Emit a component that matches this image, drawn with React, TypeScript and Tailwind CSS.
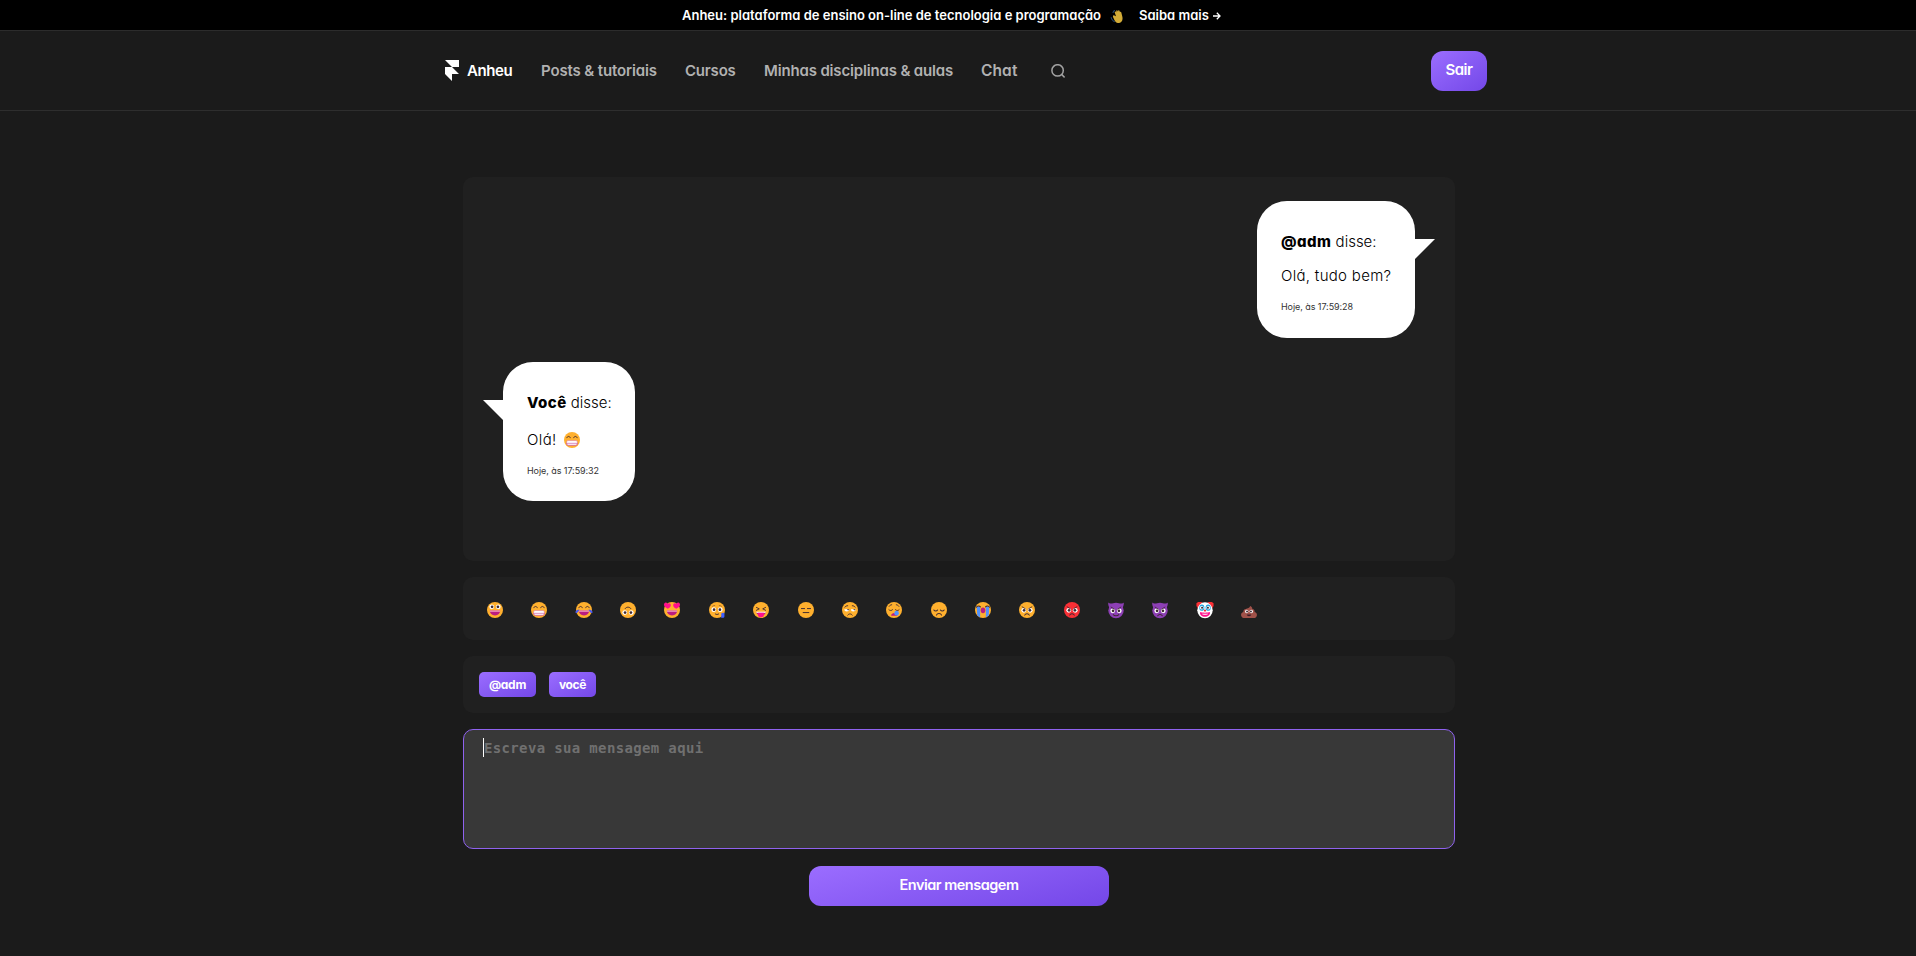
import type { ReactNode } from "react";

const YELLOW = "#FFB02E";
const DARK = "#402A32";
const WINE = "#BB1D80";

function Emoji({ children }: { children: ReactNode }) {
  return (
    <svg viewBox="2 2 28 28" className="h-4 w-4 shrink-0 overflow-visible" fill="none">
      {children}
    </svg>
  );
}

function Face({ color = YELLOW }: { color?: string }) {
  return <circle cx="16" cy="16" r="14" fill={color} />;
}

function Eyes({ y, left = 10.3, right = 21.7, r = 4.2 }: { y: number; left?: number; right?: number; r?: number }) {
  return (
    <>
      <circle cx={left} cy={y} r={r} fill="#fff" />
      <circle cx={right} cy={y} r={r} fill="#fff" />
      <circle cx={left + 0.6} cy={y} r={r * 0.56} fill={DARK} />
      <circle cx={right - 0.6} cy={y} r={r * 0.56} fill={DARK} />
    </>
  );
}

function HappyEyes() {
  return (
    <path
      d="M7 12c.8-3.2 5.2-3.2 6 0M19 12c.8-3.2 5.2-3.2 6 0"
      stroke={DARK}
      strokeWidth="1.6"
      strokeLinecap="round"
    />
  );
}

function OpenMouth() {
  return (
    <>
      <path d="M7 17h18c0 5-3.5 8.500-9 8.500s-9-3.500-9-8.500Z" fill={WINE} />
      <path d="M7 17h18l-.3 2H7.300Z" fill="#F3A3C3" />
    </>
  );
}

function Grin() {
  return (
    <Emoji>
      <Face />
      <HappyEyes />
      <rect x="6.500" y="17" width="19" height="8" rx="2.500" fill="#fff" stroke="#D45B8E" strokeWidth=".8" />
      <path d="M6.500 21.800c.5 2.200 1.500 3.400 3.500 3.400h12c2 0 3-1.200 3.500-3.400Z" fill="#fff" stroke={WINE} strokeWidth=".9" />
    </Emoji>
  );
}

function AngryFace({ color }: { color: string }) {
  return (
    <Emoji>
      <Face color={color} />
      <Eyes y={16.5} />
      <path d="M7.500 10.500 13 13.800M24.500 10.500 19 13.800" stroke={DARK} strokeWidth="1.500" strokeLinecap="round" />
      <path d="M12 25c1.500-3 6.500-3 8 0" stroke={DARK} strokeWidth="1.800" strokeLinecap="round" />
    </Emoji>
  );
}

function Devil({ smile }: { smile: boolean }) {
  return (
    <Emoji>
      <path d="M2.500 3c2 2.500 5 2 8 1L5 13C2.800 10 2 6 2.500 3ZM29.500 3c-2 2.500-5 2-8 1l5.500 9c2.200-3 3-7 2.500-10Z" fill="#8D3FB5" />
      <circle cx="16" cy="17" r="13.500" fill="#8D3FB5" />
      <Eyes y={17.5} />
      <path d="M7.500 11 13 14.500M24.500 11 19 14.500" stroke={DARK} strokeWidth="1.500" strokeLinecap="round" />
      <path
        d={smile ? "M11 24c2 3 8 3 10 0" : "M12 26c1.500-3 6.500-3 8 0"}
        stroke={DARK}
        strokeWidth="1.800"
        strokeLinecap="round"
      />
    </Emoji>
  );
}

function EmojiRow() {
  return (
    <div className="flex gap-[28.37px]">
      <Emoji>
        <Face />
        <Eyes y={10.5} />
        <OpenMouth />
      </Emoji>
      <Grin />
      <Emoji>
        <Face />
        <HappyEyes />
        <OpenMouth />
        <path d="M8 15c-4 0-6.500 2-7 4.500-.3 2 2.500 2.500 3.800 1C6 19 7 17 8 15ZM24 15c4 0 6.500 2 7 4.500.3 2-2.500 2.500-3.800 1C26 19 25 17 24 15Z" fill="#4A5BF0" />
      </Emoji>
      <Emoji>
        <Face />
        <Eyes y={20.5} />
        <path d="M11 13.500c2-3.500 8-3.500 10 0" stroke={DARK} strokeWidth="1.600" strokeLinecap="round" />
      </Emoji>
      <Emoji>
        <Face />
        <OpenMouth />
        <path d="M8.500 14C3 11 .5 7.500 2.500 4.500 4 2.300 7 2.800 8 5c2-1.800 5-1 5.800 1.200C14.800 9.500 12 12 8.500 14ZM23.500 14c5.500-3 8-6.500 6-9.500-1.500-2.200-4.500-1.700-5.500.5-2-1.800-5-1-5.800 1.200C17.200 9.500 20 12 23.500 14Z" fill="#FF0F8C" />
      </Emoji>
      <Emoji>
        <Face />
        <Eyes y={15.5} />
        <path d="M8 9.500c1-1 2.500-1.500 4-1.500M24 9.500C23 8.500 21.500 8 20 8" stroke="#8A5A2B" strokeWidth="1.200" strokeLinecap="round" />
        <path d="M13 23c1.500 1.200 4.500 1.200 6 0" stroke={DARK} strokeWidth="1.600" strokeLinecap="round" />
        <path d="M23.500 30v-8c1-1.500 5-1.500 5.500 0v5.500c0 2-2 2.500-5.500 2.500Z" fill="#3F5FFF" />
      </Emoji>
      <Emoji>
        <Face />
        <path d="m8 11.500 5 2.500-5 2.500M24 11.500 19 14l5 2.500" stroke={DARK} strokeWidth="1.600" strokeLinecap="round" strokeLinejoin="round" />
        <path d="M8 19.500h16c0 3-2 6-8 6s-8-3-8-6Z" fill={WINE} />
        <path d="M8 19h16v2H8Z" fill="#fff" />
        <path d="M11 21h10v4c0 5-10 5-10 0Z" fill="#FF0F8C" />
      </Emoji>
      <Emoji>
        <Face />
        <path d="M8 13.500h5.500M18.500 13.500H24M11 20.500h10" stroke={DARK} strokeWidth="1.700" strokeLinecap="round" />
      </Emoji>
      <Emoji>
        <Face />
        <path d="M6 14.500h8.500a4.250 4.250 0 0 1-8.500 0ZM17.500 14.500H26a4.250 4.250 0 0 1-8.500 0Z" fill="#fff" />
        <path d="M11 14.500h3.500c0 2-3 3-3.500 0ZM22 14.500h3.500c0 2-3 3-3.500 0Z" fill={DARK} />
        <path d="M7 11c1-1.800 3-2.500 5-2.500M25 11c-1-1.800-3-2.500-5-2.500M12 25c1.500-3 6.500-3 8 0" stroke={DARK} strokeWidth="1.600" strokeLinecap="round" />
      </Emoji>
      <Emoji>
        <Face />
        <path d="M7.500 9.500C8.500 8 10 7 12 6.800M24.500 9.500C23.500 8 22 7 20 6.800M7 15.500c1.500 2 5 2 6.500 0M18.500 15.500c1.500 2 5 2 6.500 0" stroke={DARK} strokeWidth="1.600" strokeLinecap="round" />
        <path d="M11 26c0-6 10-7 11 0Z" fill={WINE} />
        <circle cx="20.500" cy="21.500" r="4" fill="#5092FF" />
      </Emoji>
      <Emoji>
        <Face />
        <path d="M7 16c1.500 2.500 5 2.500 6.500 0M18.500 16c1.500 2.500 5 2.500 6.500 0M11.500 25c1.500-4 7.500-4 9 0" stroke={DARK} strokeWidth="1.800" strokeLinecap="round" />
      </Emoji>
      <Emoji>
        <Face />
        <path d="M5 10h6v19l-5-3.500ZM21 10h6l-1 15.500L21 29Z" fill="#5092FF" />
        <path d="M4.500 11C6 8.500 10 8.500 11.500 10.500M27.500 11C26 8.500 22 8.500 20.500 10.500" stroke={DARK} strokeWidth="1.800" strokeLinecap="round" />
        <ellipse cx="16" cy="16.500" rx="4" ry="5" fill={WINE} />
      </Emoji>
      <AngryFace color={YELLOW} />
      <AngryFace color="#F92F35" />
      <Devil smile />
      <Devil smile={false} />
      <Emoji>
        <path d="M1 9V4l3-2h6l3 3-9 9ZM31 9V4l-3-2h-6l-3 3 9 9Z" fill="#F92F35" />
        <ellipse cx="16" cy="16.500" rx="13.500" ry="14" fill="#fff" />
        <ellipse cx="10.500" cy="12" rx="4.500" ry="5.500" fill="#26A6DE" />
        <ellipse cx="21.500" cy="12" rx="4.500" ry="5.500" fill="#26A6DE" />
        <Eyes y={12} r={3.2} />
        <circle cx="16" cy="17" r="2" fill="#F92F35" />
        <path d="M7.500 19.500c3 1.500 14 1.500 17 0 1.500 5-3.500 8.500-8.500 8.500s-10-3.500-8.500-8.500Z" fill="#FF0F8C" />
        <path d="M10.500 22.500h11c-.8 2.600-10.200 2.600-11 0Z" fill="#fff" />
      </Emoji>
      <Emoji>
        <path d="M18 9c2.500 1 4 3 3.800 5.200 3 .5 4.500 2.500 4 5.300 3 .6 4.500 3 4 6-.5 2.800-2.500 4.500-6 4.500H8.500C5 30 2.700 28.300 2.200 25.500c-.5-3 1-5.400 4-6-.3-3 1.200-5 4.300-5.300C13 13.500 17.500 12.500 18 9Z" fill="#A0524A" />
        <Eyes y={18.5} left={12} right={20} r={3} />
        <path d="M12 24h8c-.5 4-7.500 4-8 0Z" fill="#3B1B26" />
      </Emoji>
    </div>
  );
}

function WavingHand() {
  return (
    <svg viewBox="0 0 14 14" className="mt-px ml-2 h-3.5 w-3.5 shrink-0" fill="none">
      <path
        d="M4.300 6.400 6 7.200 4.700 3.300c-.2-.9.9-1.200 1.300-.4L6.300 3.400 6.200 2c0-.9 1.100-1 1.400-.2l.4.900.2-1c.3-.7 1.200-.5 1.400.2l.4 1.400c.3-.6 1.100-.6 1.300.1l1 4.100c.9 3.600-.6 6.200-3.200 6.500-2.300.3-3.900-1.200-4.700-3.100L3 7.900c-.3-.8.500-1.800 1.300-1.500Z"
        fill="#D3AC37"
      />
      <path d="M1.200 8.500c.1 1 .5 1.800 1.200 2.400M2.800 11.500c.4.500.9.900 1.500 1.100M3 3.500C3.300 2.700 3.800 2 4.500 1.500" stroke="#24466E" strokeWidth="1.100" strokeLinecap="round" />
    </svg>
  );
}

function Arrow() {
  return (
    <svg viewBox="0 0 8 8" className="mt-px ml-1 h-2 w-2" fill="none" stroke="#fff" strokeWidth="1.300">
      <path d="M0 4h7M3.800.800 7 4 3.800 7.200" />
    </svg>
  );
}

function Header() {
  return (
    <header className="h-20 border-b border-[#2e2e2e]">
      <div className="mx-auto flex h-[79px] w-[1058px] items-center pl-4 text-[15px] leading-6 font-semibold text-[#b1b1b1]">
        <svg viewBox="0 0 14 21" className="h-[21px] w-3.5" fill="#fff">
          <path d="M0 0h14v7H7ZM0 7h7l7 7H7v7l-7-7Z" />
        </svg>
        <span className="ml-[8px] w-[46px] whitespace-nowrap tracking-[-0.4px] text-white">Anheu</span>
        <nav className="ml-7 flex gap-7 whitespace-nowrap">
          <a className="w-[116px] tracking-[-0.13px]">Posts &amp; tutoriais</a>
          <a className="w-[51px] tracking-[-0.2px]">Cursos</a>
          <a className="w-[189px] tracking-[-0.16px]">Minhas disciplinas &amp; aulas</a>
          <a className="w-[37px] text-[15.5px] tracking-[0.1px]">Chat</a>
        </nav>
        <svg viewBox="0 0 14 14" className="ml-[33px] h-3.5 w-3.5" fill="none" stroke="#a2a2a2" strokeWidth="1.500">
          <circle cx="6.600" cy="6.400" r="5.700" />
          <path d="m10.600 10.400 3 3" />
        </svg>
        <button className="mt-px ml-auto h-10 w-14 rounded-xl bg-linear-to-br from-[#9b6dff] to-[#7447e8] pb-0.5 text-center tracking-[-0.45px] text-white">
          Sair
        </button>
      </div>
    </header>
  );
}

export default function App() {
  return (
    <div className="h-[956px] overflow-hidden bg-[#1b1b1b] font-['Inter',sans-serif] [font-feature-settings:'cv11']">
      <div className="flex h-[31px] items-center border-b border-[#2c2c2c] bg-black pl-[682px] text-[13px] font-semibold whitespace-nowrap text-white">
        <span className="w-[420px] pt-px">Anheu: plataforma de ensino on-line de tecnologia e programação</span>
        <WavingHand />
        <span className="ml-[15px] w-[70px] pt-px">Saiba mais</span>
        <Arrow />
      </div>
      <Header />

      <main className="mx-auto flex w-[994px] flex-col gap-4 pt-[66px] pl-0.5">
        <section className="flex h-[384px] flex-col gap-6 rounded-[10px] bg-[#202020] px-10 pt-6 text-[15px] leading-6 font-light whitespace-nowrap text-black">
          <div className="relative h-[137px] w-[158px] self-end rounded-[30px] bg-white px-6 pt-[29px]">
            <p>
              <b className="font-extrabold tracking-[0.45px]">@adm</b> <span>disse:</span>
            </p>
            <p className="mt-2.5 tracking-[0.3px]">Olá, tudo bem?</p>
            <p className="mt-[11px] text-[9px] leading-4 font-normal tracking-[-0.07px] text-[#333]">Hoje, às 17:59:28</p>
            <svg viewBox="0 0 20 20" className="absolute top-[38px] left-full h-5 w-5" fill="#fff">
              <path d="M-1 0H20L0 20H-1Z" />
            </svg>
          </div>
          <div className="relative h-[139px] w-[132px] rounded-[30px] bg-white px-6 pt-[29px]">
            <p>
              <b className="font-extrabold tracking-[0.45px]">Você</b> <span>disse:</span>
            </p>
            <p className="mt-[13px] flex items-center gap-[7px] tracking-[0.4px]">
              Olá! <Grin />
            </p>
            <p className="mt-[11px] text-[9px] leading-4 font-normal tracking-[-0.07px] text-[#333]">Hoje, às 17:59:32</p>
            <svg viewBox="0 0 20 20" className="absolute top-[38px] right-full h-5 w-5" fill="#fff">
              <path d="M21 0H0L20 20H21Z" />
            </svg>
          </div>
        </section>

        <section className="h-[63px] rounded-[10px] bg-[#202020] px-6 pt-[24.5px]">
          <EmojiRow />
        </section>

        <section className="flex h-[57px] gap-[13px] rounded-[10px] bg-[#202020] p-4 text-xs leading-[26px] font-bold text-white">
          <span className="h-[25px] w-[57px] rounded-[5px] bg-linear-to-br from-[#9b6dff] to-[#7447e8] text-center tracking-[-0.3px]">
            @adm
          </span>
          <span className="h-[25px] w-[47px] rounded-[5px] bg-linear-to-br from-[#9b6dff] to-[#7447e8] text-center tracking-[-0.4px]">
            você
          </span>
        </section>

        <div className="flex h-[120px] rounded-[10px] border border-[#8f62ee] bg-[#383838] pt-2 pl-[19px]">
          <span className="h-[19px] w-px bg-white" />
          <span className="font-['DejaVu_Sans_Mono',monospace] text-[14px] leading-5 font-bold tracking-[0.35px] text-[#707070]">
            Escreva sua mensagem aqui
          </span>
        </div>

        <button className="mt-px h-10 w-[300px] self-center rounded-xl bg-[linear-gradient(165deg,#9b6dff,#7447e8)] pb-0.5 text-[14.5px] font-semibold tracking-[-0.5px] text-white">
          Enviar mensagem
        </button>
      </main>
    </div>
  );
}
